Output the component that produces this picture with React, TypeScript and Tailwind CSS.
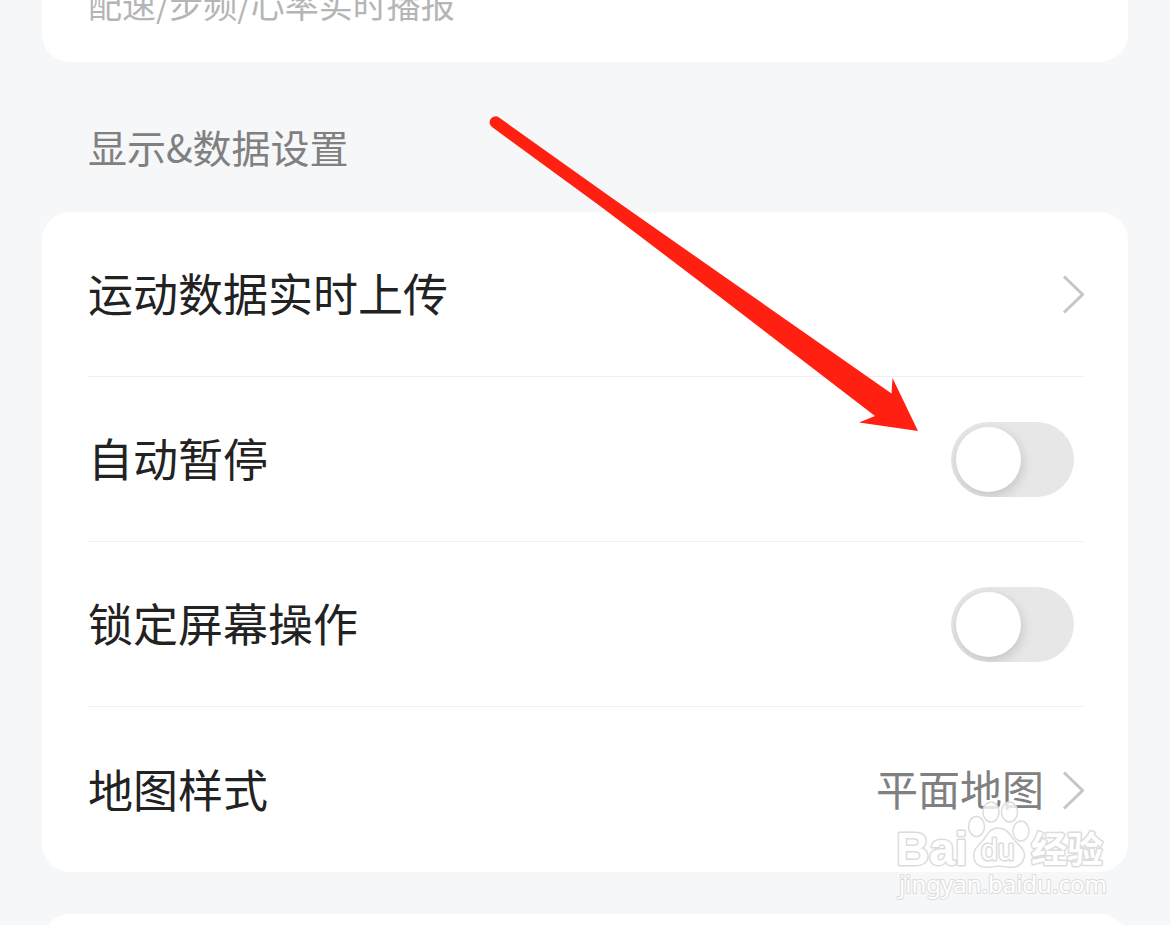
import { FC, ReactElement, ReactNode } from "react";

const Chevron: FC = (): ReactElement => (
  <svg className="h-10 w-6 shrink-0" viewBox="0 0 24 40" fill="none" aria-hidden="true">
    <path d="M4 2.500 L22.500 20.500 L4 38.500" stroke="#c6c6c6" strokeWidth="3" />
  </svg>
);

const Row: FC<{ children: ReactNode }> = ({ children }): ReactElement => (
  <li className="h-[165px] border-b border-[#efefef] last:border-b-0">{children}</li>
);

const LinkRow: FC<{ label: string; value?: string }> = ({ label, value }): ReactElement => (
  <Row>
    <button type="button" className="flex h-full w-full cursor-pointer items-center justify-between text-left">
      <span className="pb-0.5">{label}</span>
      <span className="flex items-center gap-4 text-[42px] text-[#808080]">
        {value && <span className="pb-1">{value}</span>}
        <Chevron />
      </span>
    </button>
  </Row>
);

const SwitchRow: FC<{ id: string; label: string }> = ({ id, label }): ReactElement => (
  <Row>
    <div className="flex h-full items-center justify-between pr-2.5">
      <label htmlFor={id} className="pb-0.5">
        {label}
      </label>
      <input
        id={id}
        type="checkbox"
        role="switch"
        className="flex h-[75px] w-[123px] shrink-0 cursor-pointer appearance-none items-center overflow-hidden rounded-full bg-[#e7e7e7] px-[5px] before:size-[65px] before:rounded-full before:bg-white before:shadow-[1px_4px_12px_rgba(0,0,0,0.16)] before:content-[''] checked:justify-end checked:bg-green-500"
      />
    </div>
  </Row>
);

const Arrow: FC = (): ReactElement => (
  <svg
    className="pointer-events-none absolute right-[210px] -top-24 h-[316px] w-[430px]"
    viewBox="488 116 430 316"
    aria-hidden="true"
  >
    <path
      d="M499 117.500 L612 198 L722 275 L891.500 393.500 L892.500 378 L918 431 L859 422.500 L875 416 L720 297 L645 240 L600 206 L492 127 A5.800 5.800 0 0 1 499 117.500 Z"
      fill="#ff2012"
    />
  </svg>
);

const Watermark: FC = (): ReactElement => (
  <svg
    className="pointer-events-none absolute right-5 -bottom-8 h-[104px] w-[216px]"
    viewBox="892 799 216 104"
    fill="#ffffff"
    stroke="#dcdcdc"
    strokeWidth="1.5"
    aria-hidden="true"
  >
    <g fillOpacity="0.8">
      <ellipse cx="976.500" cy="825.500" rx="8" ry="10" />
      <ellipse cx="991" cy="811" rx="8" ry="10" />
      <ellipse cx="1009.500" cy="811" rx="8" ry="10" />
      <ellipse cx="1021" cy="830" rx="8" ry="10" />
    </g>
    <path d="M998 827 C1007 827 1010 834 1015 840 C1021 846 1026 850 1024 857 C1022 865 1015 867 1007 866 C1001 865 996 865 990 866 C981 867 975 865 974 857 C972 849 979 844 984 838 C988 832 991 827 998 827 Z" />
    <g className="[paint-order:stroke]" strokeLinejoin="round" strokeWidth="3">
      <text x="896" y="864" fontSize="46" className="font-['Liberation_Sans',sans-serif] font-bold">
        Bai
      </text>
      <text x="981" y="859" fontSize="30" className="font-['Liberation_Sans',sans-serif]">
        du
      </text>
      <text x="1031" y="862" fontSize="36" className="font-['Noto_Sans_CJK_SC',sans-serif] font-bold">
        经验
      </text>
      <text x="899" y="892" fontSize="24" strokeWidth="2" className="font-['Noto_Sans',sans-serif]">
        jingyan.baidu.com
      </text>
    </g>
  </svg>
);

export default function App(): ReactElement {
  return (
    <main className="h-screen overflow-hidden bg-[#f5f7f9] px-[42px] font-['Noto_Sans_CJK_SC',sans-serif]">
      <section className="flex h-[62px] items-end rounded-b-[28px] bg-white px-[46px] pb-10">
        <p className="text-[34px] leading-9 whitespace-nowrap text-[#b5b5b5]">配速/步频/心率实时播报</p>
      </section>

      <h2 className="px-[46px] pt-14 pb-[38px] text-[39px] leading-14 text-[#808080]">显示&amp;数据设置</h2>

      <section className="relative rounded-[28px] bg-white pr-11 pl-[46px]">
        <ul className="text-[45px] text-[#222222]">
          <LinkRow label="运动数据实时上传" />
          <SwitchRow id="auto-pause" label="自动暂停" />
          <SwitchRow id="lock-screen" label="锁定屏幕操作" />
          <LinkRow label="地图样式" value="平面地图" />
        </ul>
        <Arrow />
        <Watermark />
      </section>

      <section className="mt-[42px] h-40 rounded-[28px] bg-white" />
    </main>
  );
}
